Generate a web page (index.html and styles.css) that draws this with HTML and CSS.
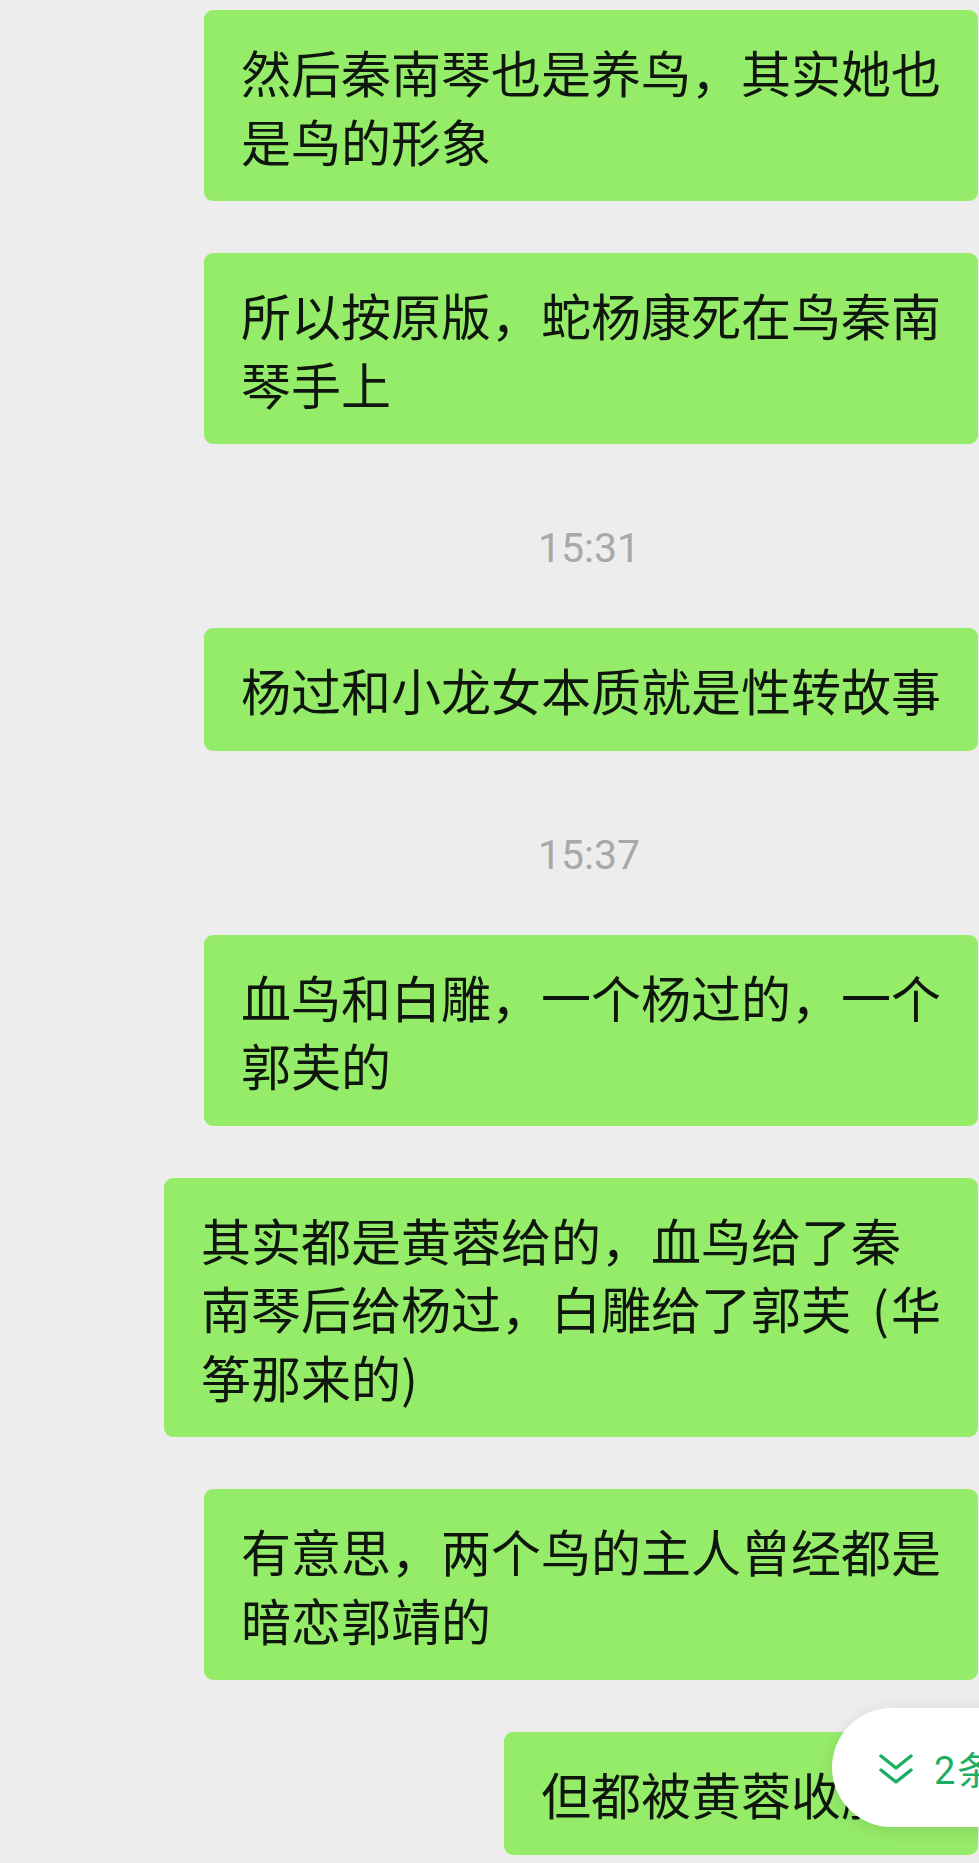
FILE: index.html
```html
<!DOCTYPE html>
<html lang="zh-CN">
<head>
<meta charset="utf-8">
<title>Chat</title>
<link rel="stylesheet" href="styles.css">
</head>
<body>
<div class="screen">
  <div class="chat">
    <div class="bubble first">然后秦南琴也是养鸟，其实她也<br>是鸟的形象</div>
    <div class="bubble">所以按原版，蛇杨康死在鸟秦南<br>琴手上</div>
    <div class="time">15:31</div>
    <div class="bubble">杨过和小龙女本质就是性转故事</div>
    <div class="time">15:37</div>
    <div class="bubble">血鸟和白雕，一个杨过的，一个<br>郭芙的</div>
    <div class="bubble">其实都是黄蓉给的，血鸟给了秦<br>南琴后给杨过，白雕给了郭芙 <span class="paren">(</span>华<br>筝那来的)</div>
    <div class="bubble">有意思，两个鸟的主人曾经都是<br>暗恋郭靖的</div>
    <div class="bubble">但都被黄蓉收服了</div>
  </div>
  <div class="new-pill">
    <svg class="chev" width="34" height="32" viewBox="0 0 34 32" aria-hidden="true">
      <path d="M2 3 L17 15 L32 3" fill="none" stroke="#1dae63" stroke-width="3.4" stroke-linecap="round" stroke-linejoin="round"/>
      <path d="M2 17 L17 29 L32 17" fill="none" stroke="#1dae63" stroke-width="3.4" stroke-linecap="round" stroke-linejoin="round"/>
    </svg>
    <span class="pill-text">2条新消息</span>
  </div>
</div>
</body>
</html>
```

FILE: styles.css
```css
html, body {
  margin: 0;
  padding: 0;
  background: #ededed;
}

body {
  overflow: hidden;
}

.screen {
  position: relative;
  width: 979px;
  height: 1863px;
  overflow: hidden;
  background: #ededed;
}

.chat {
  display: flex;
  flex-direction: column;
  align-items: flex-end;
  padding: 10px 1px 0 0;
}

.bubble {
  background: #95ec69;
  color: #0f160d;
  font-family: "Noto Sans CJK SC", "Noto Sans", sans-serif;
  font-size: 50px;
  line-height: 68.5px;
  padding: 27px 37px 27px 37px;
  border-radius: 9px;
  white-space: nowrap;
  margin-top: 52px;
}

.bubble.first {
  margin-top: 0;
}

.paren {
  margin-left: 10px;
  margin-right: 2px;
}

.time {
  align-self: stretch;
  padding-left: 200px;
  text-align: center;
  font-family: Roboto, "Liberation Sans", sans-serif;
  font-size: 41px;
  line-height: 44px;
  color: #a8a8a8;
  margin-top: 82px;
}

.time + .bubble {
  margin-top: 58px;
}

.new-pill {
  position: absolute;
  left: 832px;
  top: 1708px;
  height: 119px;
  width: 300px;
  box-sizing: border-box;
  padding-left: 47px;
  display: flex;
  align-items: center;
  gap: 21px;
  background: #ffffff;
  border-radius: 60px;
  box-shadow: 0 4px 18px rgba(0, 0, 0, 0.10);
}

.chev {
  flex: none;
  display: block;
  margin-top: 2px;
}

.pill-text {
  font-family: Roboto, "Noto Sans CJK SC", sans-serif;
  font-size: 38px;
  color: #1dae63;
  white-space: nowrap;
  letter-spacing: 2px;
}
```
